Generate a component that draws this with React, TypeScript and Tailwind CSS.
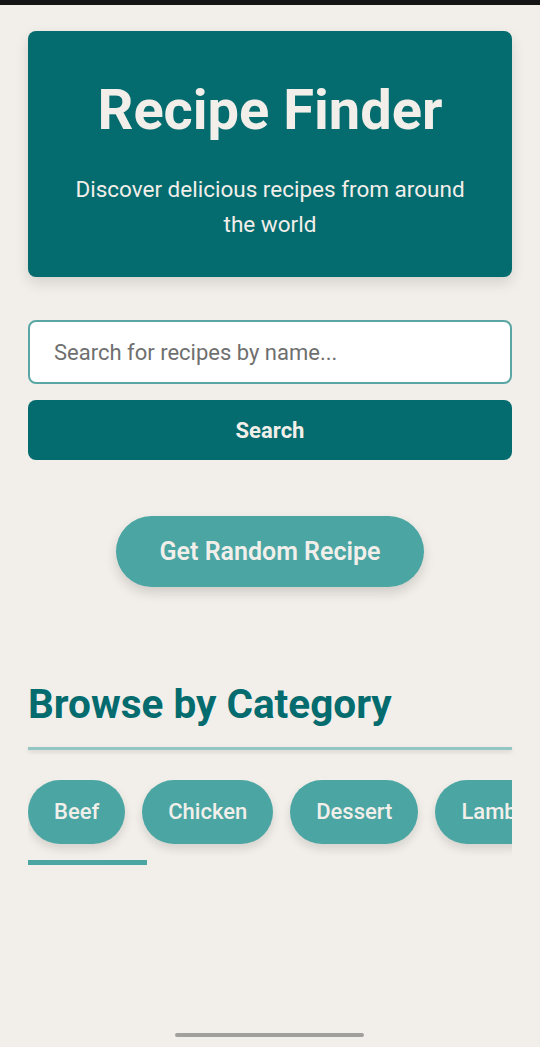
import React from 'react';

const categories = ['Beef', 'Chicken', 'Dessert', 'Lamb', 'Pasta'];

export default function App() {
  return (
    <div className="relative flex min-h-[1047px] w-full flex-col bg-[#f2efea] font-['Roboto',sans-serif]">
      <div className="h-[5px] w-full bg-[#151515]" />

      <div className="flex flex-col px-7">
        <header className="mt-[26px] flex h-[246px] flex-col items-center rounded-lg bg-[#046b6e] px-6 pt-[46px] text-center text-[#f2efea] shadow-[0_6px_14px_rgba(0,0,0,0.12)]">
          <h1 className="text-[56px] leading-[1.2] font-bold">Recipe Finder</h1>
          <p className="mt-[28px] max-w-[410px] text-[22.5px] leading-[35px]">
            Discover delicious recipes from around the world
          </p>
        </header>

        <div className="mt-[43px] flex flex-col gap-4">
          <input
            type="text"
            placeholder="Search for recipes by name..."
            className="h-16 w-full rounded-lg border-2 border-[#5aa6a4] bg-white px-6 text-[22px] text-[#333] outline-none placeholder:text-[#6f6f6f]"
          />
          <button className="h-[60px] w-full rounded-lg bg-[#046b6e] text-[22px] font-bold text-[#f2efea]">
            Search
          </button>
        </div>

        <div className="mt-[56px] flex justify-center">
          <button className="h-[71px] w-[308px] rounded-full bg-[#4aa5a3] text-[25px] font-semibold text-[#f2efea] shadow-[0_6px_12px_rgba(0,0,0,0.14)]">
            Get Random Recipe
          </button>
        </div>

        <h2 className="mt-[93px] text-[40.5px] leading-[1.2] font-bold text-[#046b6e]">Browse by Category</h2>
        <div className="mt-[18px] h-[3px] w-full bg-[#93c6c4] shadow-[0_2px_4px_rgba(0,0,0,0.12)]" />

        <div className="mt-[30px] overflow-hidden">
          <div className="flex gap-[17px] pb-[16px]">
            {categories.map((c) => (
              <button
                key={c}
                className="h-16 shrink-0 rounded-full bg-[#4aa5a3] px-[26px] text-[22px] font-medium text-[#f2efea] shadow-[0_5px_10px_rgba(0,0,0,0.12)]"
              >
                {c}
              </button>
            ))}
          </div>
          <div className="h-[5px] w-[119px] bg-[#4aa5a3]" />
        </div>
      </div>

      <div className="absolute bottom-[10px] left-[175px] h-[4px] w-[189px] rounded-full bg-[#a2a09d]" />
    </div>
  );
}
